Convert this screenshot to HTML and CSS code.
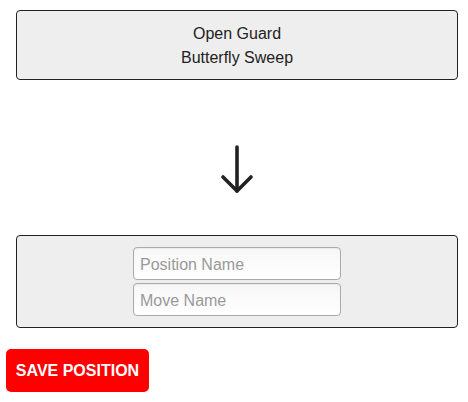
FILE: index.html
```html
<!DOCTYPE html>
<html>
<head>
<meta charset="utf-8">
<link rel="stylesheet" href="styles.css">
</head>
<body>
<div class="page">
  <div class="card from">
    <div class="line">Open Guard</div>
    <div class="line">Butterfly Sweep</div>
  </div>
  <div class="arrow-wrap">
    <svg class="arrow" width="36" height="52" viewBox="0 0 36 52" fill="none" stroke="#222" stroke-width="3.6" stroke-linecap="round" stroke-linejoin="round">
      <line x1="18" y1="3" x2="18" y2="47"/>
      <polyline points="4,33 18,47 32,33"/>
    </svg>
  </div>
  <div class="card to">
    <input class="field" type="text" placeholder="Position Name">
    <input class="field" type="text" placeholder="Move Name">
  </div>
  <button class="save">SAVE POSITION</button>
</div>
</body>
</html>
```
FILE: styles.css
```css
html, body {
  margin: 0;
  padding: 0;
  background: #fff;
}
body {
  font-family: "Liberation Sans", Arial, sans-serif;
  font-size: 16px;
  color: #222;
}
.page {
  display: flex;
  flex-direction: column;
  padding-top: 10px;
}
.card {
  margin: 0 10px 0 16px;
  border: 1px solid #222;
  border-radius: 4px;
  background: #eeeeee;
}
.from {
  padding: 11px 0 9px;
  text-align: center;
}
.line {
  line-height: 24px;
}
.arrow-wrap {
  height: 155px;
  display: flex;
  justify-content: center;
  padding-left: 6px;
  box-sizing: border-box;
  padding-top: 64px;
}
.arrow {
  display: block;
}
.to {
  display: flex;
  flex-direction: column;
  align-items: center;
  gap: 3px;
  padding: 11px 0 11px;
}
.field {
  box-sizing: border-box;
  width: 208px;
  height: 33px;
  margin: 0;
  padding: 2px 6px 0;
  border: 1px solid #aaaaaa;
  border-radius: 4px;
  background: linear-gradient(to bottom, #f7f7f7, #ffffff);
  box-shadow: inset 0 1px 2px rgba(0,0,0,0.06);
  font-family: "Liberation Sans", Arial, sans-serif;
  font-size: 16px;
  color: #333;
  outline: none;
}
.field::placeholder {
  color: #999;
}
.save {
  align-self: flex-start;
  margin: 21px 0 0 6px;
  width: 143px;
  height: 43px;
  padding: 0;
  border: none;
  border-radius: 5px;
  background: #ff0000;
  color: #fff;
  font-family: "Liberation Sans", Arial, sans-serif;
  font-weight: bold;
  font-size: 16px;
}
```
